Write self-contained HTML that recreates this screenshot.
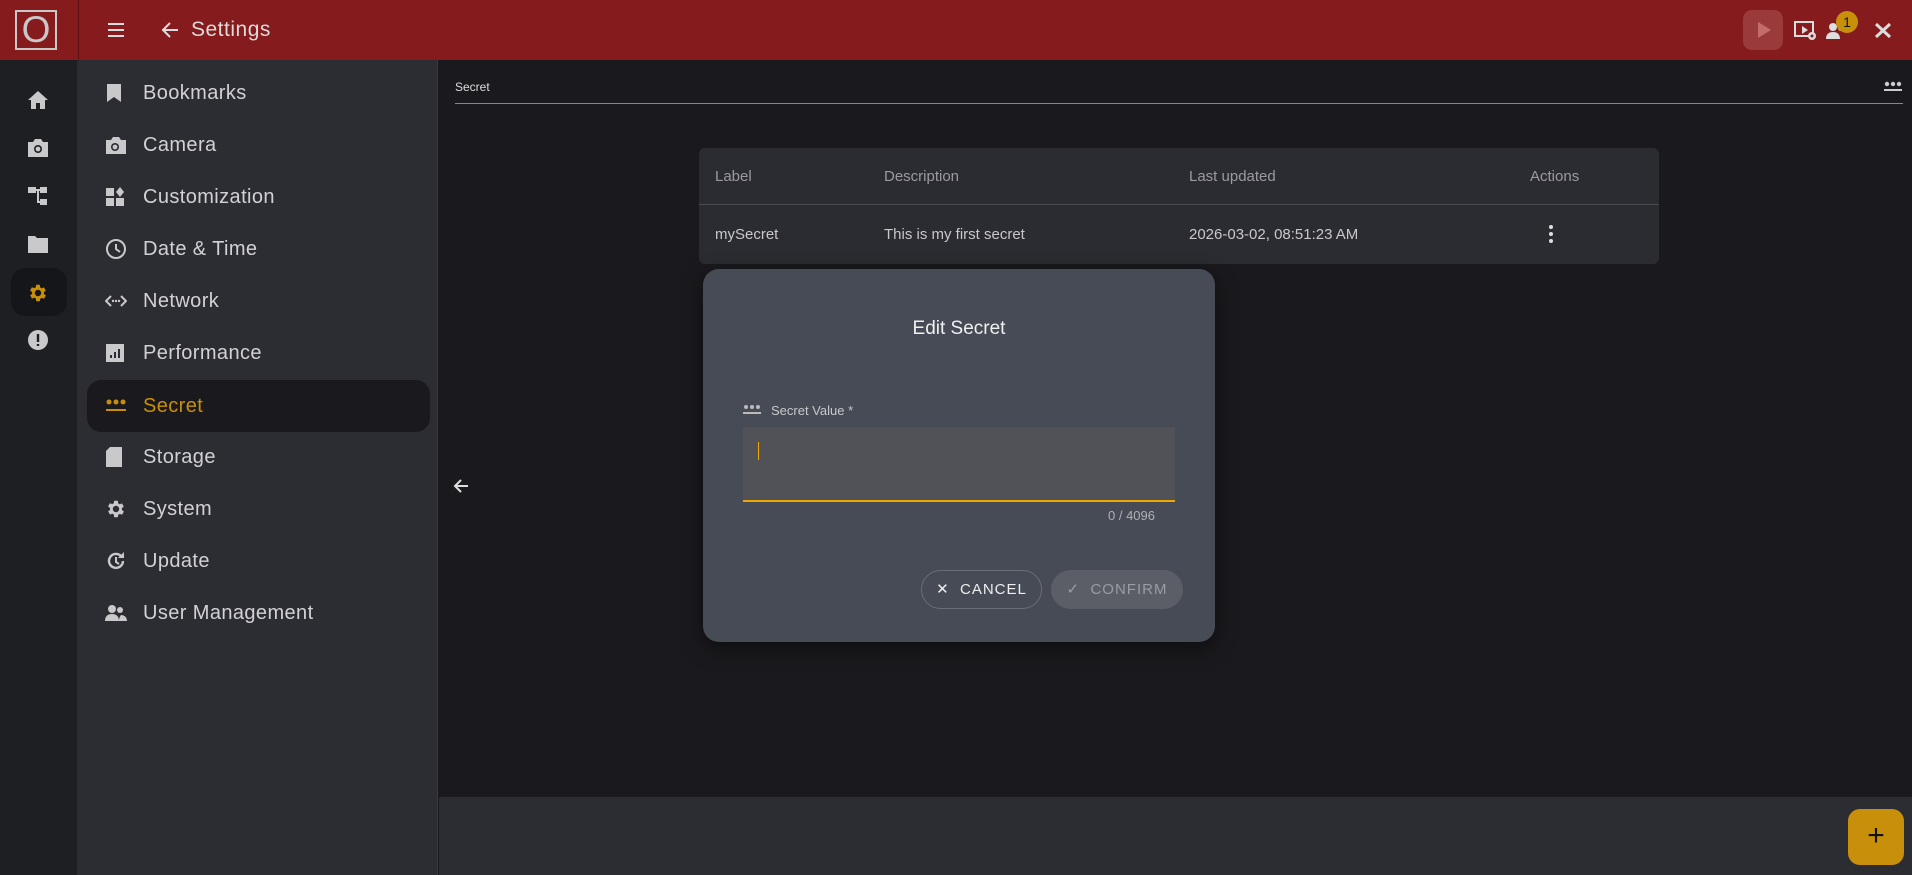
<!DOCTYPE html>
<html><head><meta charset="utf-8"><style>
*{box-sizing:border-box;margin:0;padding:0}
body{width:1912px;height:875px;overflow:hidden;background:#1a1a1e;font-family:"Liberation Sans",sans-serif;position:relative;color:#d6d6d8}
.abs{position:absolute}
#hdr{left:0;top:0;width:1912px;height:60px;background:#861b1d}
#rail{left:0;top:60px;width:78px;height:815px;background:#1d1f23;border-right:1px solid #2a2b30}
#side{left:78px;top:60px;width:360px;height:815px;background:#2c2d32;border-right:1px solid #3a3b40}
.mi{position:absolute;left:9px;width:343px;height:52px;display:flex;align-items:center;font-size:20px;color:#d2d2d6;letter-spacing:.4px}
.mi svg{position:absolute;left:18px}
.mi span{position:absolute;left:56px}
.sel{background:#1a1a1e;border-radius:14px;color:#c8900a}
.ri{position:absolute;left:27px}
</style></head><body>
<div id="hdr" class="abs">
 <div class="abs" style="left:15px;top:10px;width:42px;height:40px;border:2px solid #c8c8c8;color:#c8c8c8;font-size:37px;line-height:36px;text-align:center">O</div>
 <div class="abs" style="left:78px;top:0;width:1px;height:60px;background:#5a1012"></div>
 <svg class="abs" style="left:106px;top:20px" width="20" height="20" viewBox="0 0 20 20"><path d="M2 4h16M2 10h16M2 16h16" stroke="#ddd" stroke-width="2"/></svg>
 <svg class="abs" style="left:160px;top:20px" width="20" height="20" viewBox="0 0 20 20"><path d="M18 10H4M10 3L3 10l7 7" stroke="#ddd" stroke-width="2" fill="none"/></svg>
 <div class="abs" style="left:191px;top:18px;font-size:21px;color:#dcdcdc;letter-spacing:.5px">Settings</div>
 <div class="abs" style="left:1743px;top:10px;width:40px;height:40px;border-radius:9px;background:#9a3a3b"></div>
 <svg class="abs" style="left:1756px;top:21px" width="16" height="18"><path d="M2 1l13 8-13 8z" fill="#c46c6c"/></svg>
 <svg class="abs" style="left:1794px;top:20px" width="24" height="22" viewBox="0 0 24 22"><rect x="1" y="2" width="18" height="14" fill="none" stroke="#ddd" stroke-width="2"/><path d="M8 6l6 4-6 4z" fill="#ddd"/><circle cx="18" cy="16" r="4" fill="#ddd"/><circle cx="18" cy="16" r="1.5" fill="#861b1d"/></svg>
 <svg class="abs" style="left:1826px;top:22px" width="22" height="18" viewBox="0 0 22 18"><circle cx="7" cy="5" r="4" fill="#ddd"/><path d="M0 17c0-5 3-7 7-7s7 2 7 7z" fill="#ddd"/><circle cx="15" cy="6" r="3" fill="#ddd"/></svg>
 <div class="abs" style="left:1836px;top:11px;width:22px;height:22px;border-radius:50%;background:#c8900a;color:#111;font-size:14px;text-align:center;line-height:22px">1</div>
 <svg class="abs" style="left:1873px;top:21px" width="20" height="18" viewBox="0 0 20 18"><path d="M3 3l14 13M3 16L17 3" stroke="#ddd" stroke-width="3"/></svg>
</div>
<div id="rail" class="abs">
 <svg class="ri" style="top:30px" width="22" height="20" viewBox="0 0 22 20"><path d="M11 1L1 10h3v9h5v-6h4v6h5v-9h3z" fill="#c9c9cc"/></svg>
 <svg class="ri" style="top:78px" width="22" height="20" viewBox="0 0 22 20"><path d="M1 4h5l2-3h6l2 3h5v15H1z" fill="#c9c9cc"/><circle cx="11" cy="11" r="4" fill="#1d1f23"/><circle cx="11" cy="11" r="2.4" fill="#c9c9cc"/></svg>
 <svg class="ri" style="top:126px" width="22" height="20" viewBox="0 0 22 20"><rect x="1" y="1" width="8" height="6" fill="#c9c9cc"/><rect x="13" y="1" width="7" height="6" fill="#c9c9cc"/><rect x="13" y="13" width="7" height="6" fill="#c9c9cc"/><path d="M9 4h4M11 4v12h2" stroke="#c9c9cc" stroke-width="2" fill="none"/></svg>
 <svg class="ri" style="top:174px" width="22" height="20" viewBox="0 0 22 20"><path d="M1 2h7l2 2h11v15H1z" fill="#c9c9cc"/></svg>
 <div class="abs" style="left:11px;top:208px;width:56px;height:48px;border-radius:14px;background:#151619"></div>
 <svg class="ri" style="top:222px" width="22" height="22" viewBox="0 0 24 24"><path d="M19.4 13a7.5 7.5 0 000-2l2.1-1.6-2-3.5-2.5 1a7.3 7.3 0 00-1.7-1L15 3h-4l-.4 2.7a7.3 7.3 0 00-1.7 1l-2.5-1-2 3.5L6.6 11a7.5 7.5 0 000 2l-2.1 1.6 2 3.5 2.5-1a7.3 7.3 0 001.7 1L11 21h4l.4-2.7a7.3 7.3 0 001.7-1l2.5 1 2-3.5zM13 15.5a3.5 3.5 0 110-7 3.5 3.5 0 010 7z" fill="#c8900a" transform="translate(-1 0)"/></svg>
 <svg class="ri" style="top:269px" width="22" height="22" viewBox="0 0 22 22"><circle cx="11" cy="11" r="10" fill="#c9c9cc"/><path d="M11 5v8M11 15v2" stroke="#1d1f23" stroke-width="2.4"/></svg>
</div>
<div id="side" class="abs">
 <div class="mi" style="top:7px"><svg width="18" height="20"><path d="M2 1h14v18l-7-5-7 5z" fill="#c9c9cc"/></svg><span>Bookmarks</span></div>
 <div class="mi" style="top:59px"><svg width="22" height="20"><path d="M1 5h5l2-3h6l2 3h5v14H1z" fill="#c9c9cc"/><circle cx="10" cy="12" r="4" fill="#2c2d32"/><circle cx="10" cy="12" r="2.4" fill="#c9c9cc"/></svg><span>Camera</span></div>
 <div class="mi" style="top:111px"><svg width="20" height="20"><rect x="1" y="1" width="8" height="8" fill="#c9c9cc"/><rect x="1" y="11" width="8" height="8" fill="#c9c9cc"/><rect x="11" y="11" width="8" height="8" fill="#c9c9cc"/><path d="M15 0l4 5-4 5-4-5z" fill="#c9c9cc"/></svg><span>Customization</span></div>
 <div class="mi" style="top:163px"><svg width="22" height="22"><circle cx="11" cy="11" r="9" fill="none" stroke="#c9c9cc" stroke-width="2"/><path d="M11 6v5l4 3" stroke="#c9c9cc" stroke-width="2" fill="none"/></svg><span>Date &amp; Time</span></div>
 <div class="mi" style="top:215px"><svg width="22" height="20"><path d="M6 5l-5 5 5 5M16 5l5 5-5 5" stroke="#c9c9cc" stroke-width="2" fill="none"/><circle cx="8" cy="10" r="1.2" fill="#c9c9cc"/><circle cx="11" cy="10" r="1.2" fill="#c9c9cc"/><circle cx="14" cy="10" r="1.2" fill="#c9c9cc"/></svg><span>Network</span></div>
 <div class="mi" style="top:267px"><svg width="20" height="20"><rect x="1" y="1" width="18" height="18" fill="#c9c9cc"/><path d="M6 15v-3M10 15V9M14 15V6" stroke="#2c2d32" stroke-width="2"/></svg><span>Performance</span></div>
 <div class="mi sel" style="top:320px"><svg width="22" height="14"><circle cx="4" cy="3" r="2.5" fill="#c8900a"/><circle cx="11" cy="3" r="2.5" fill="#c8900a"/><circle cx="18" cy="3" r="2.5" fill="#c8900a"/><rect x="1" y="10" width="20" height="2" fill="#c8900a"/></svg><span>Secret</span></div>
 <div class="mi" style="top:371px"><svg width="18" height="22"><path d="M5 1h12v20H1V5z" fill="#c9c9cc"/></svg><span>Storage</span></div>
 <div class="mi" style="top:423px"><svg width="22" height="22" viewBox="0 0 24 24"><path d="M19.4 13a7.5 7.5 0 000-2l2.1-1.6-2-3.5-2.5 1a7.3 7.3 0 00-1.7-1L15 3h-4l-.4 2.7a7.3 7.3 0 00-1.7 1l-2.5-1-2 3.5L6.6 11a7.5 7.5 0 000 2l-2.1 1.6 2 3.5 2.5-1a7.3 7.3 0 001.7 1L11 21h4l.4-2.7a7.3 7.3 0 001.7-1l2.5 1 2-3.5zM13 15.5a3.5 3.5 0 110-7 3.5 3.5 0 010 7z" fill="#c9c9cc" transform="translate(-1 0)"/></svg><span>System</span></div>
 <div class="mi" style="top:475px"><svg width="22" height="22"><path d="M18 11a7 7 0 11-2-5" stroke="#c9c9cc" stroke-width="2.4" fill="none"/><path d="M19 2v6h-6z" fill="#c9c9cc"/><path d="M11 7v5l3 2" stroke="#c9c9cc" stroke-width="2" fill="none"/></svg><span>Update</span></div>
 <div class="mi" style="top:527px"><svg width="22" height="18"><circle cx="7" cy="5" r="4" fill="#c9c9cc"/><path d="M0 17c0-5 3-7 7-7s7 2 7 7z" fill="#c9c9cc"/><circle cx="15" cy="6" r="3" fill="#c9c9cc"/><path d="M14 17c0-4 2-6 2-6 3 0 6 2 6 6z" fill="#c9c9cc"/></svg><span>User Management</span></div>
</div>
<div class="abs" style="left:455px;top:80px;font-size:12px;color:#ddd">Secret</div>
<svg class="abs" style="left:1884px;top:81px" width="18" height="12"><circle cx="3" cy="3" r="2.2" fill="#ccc"/><circle cx="9" cy="3" r="2.2" fill="#ccc"/><circle cx="15" cy="3" r="2.2" fill="#ccc"/><rect x="0" y="8" width="18" height="2" fill="#ccc"/></svg>
<div class="abs" style="left:455px;top:103px;width:1448px;height:1px;background:#888"></div>
<svg class="abs" style="left:452px;top:477px" width="18" height="18"><path d="M16 9H3M9 3L3 9l6 6" stroke="#ddd" stroke-width="2" fill="none"/></svg>
<div class="abs" style="left:699px;top:148px;width:960px;height:116px;background:#2b2c31;border-radius:6px;font-size:15px">
 <div class="abs" style="left:0;top:56px;width:960px;height:1px;background:#4a4b50"></div>
 <div class="abs" style="left:16px;top:20px;color:#9a9aa0">Label</div>
 <div class="abs" style="left:185px;top:20px;color:#9a9aa0">Description</div>
 <div class="abs" style="left:490px;top:20px;color:#9a9aa0">Last updated</div>
 <div class="abs" style="left:831px;top:20px;color:#9a9aa0">Actions</div>
 <div class="abs" style="left:16px;top:78px;color:#c8c8cc">mySecret</div>
 <div class="abs" style="left:185px;top:78px;color:#c8c8cc">This is my first secret</div>
 <div class="abs" style="left:490px;top:78px;color:#c8c8cc">2026-03-02, 08:51:23 AM</div>
 <svg class="abs" style="left:850px;top:77px" width="4" height="18"><circle cx="2" cy="2" r="2" fill="#ddd"/><circle cx="2" cy="9" r="2" fill="#ddd"/><circle cx="2" cy="16" r="2" fill="#ddd"/></svg>
</div>
<div class="abs" style="left:703px;top:269px;width:512px;height:373px;background:#474b55;border-radius:16px;box-shadow:0 6px 20px rgba(0,0,0,.5)">
 <div class="abs" style="left:0;top:49px;width:512px;text-align:center;font-size:19px;color:#f0f0f0">Edit Secret</div>
 <svg class="abs" style="left:40px;top:136px" width="18" height="10"><circle cx="3" cy="2" r="2" fill="#bbb"/><circle cx="9" cy="2" r="2" fill="#bbb"/><circle cx="15" cy="2" r="2" fill="#bbb"/><rect x="0" y="7" width="18" height="2" fill="#bbb"/></svg>
 <div class="abs" style="left:68px;top:134px;font-size:13px;color:#c8c8cc">Secret Value *</div>
 <div class="abs" style="left:40px;top:158px;width:432px;height:75px;background:#515257;border-bottom:2px solid #f0a800"></div>
 <div class="abs" style="left:55px;top:173px;width:1px;height:18px;background:#f0a800"></div>
 <div class="abs" style="left:405px;top:239px;font-size:13px;color:#b0b0b4">0 / 4096</div>
 <div class="abs" style="left:218px;top:301px;width:121px;height:39px;border:1px solid #6a6d75;border-radius:20px;font-size:15px;color:#eee;letter-spacing:1px;line-height:37px;text-align:center">✕&nbsp;&nbsp;CANCEL</div>
 <div class="abs" style="left:348px;top:301px;width:132px;height:39px;background:#5b5e66;border-radius:20px;font-size:15px;color:#9a9ca2;letter-spacing:1px;line-height:39px;text-align:center">✓&nbsp;&nbsp;CONFIRM</div>
</div>
<div class="abs" style="left:439px;top:797px;width:1473px;height:78px;background:#2c2d32"></div>
<div class="abs" style="left:1848px;top:809px;width:56px;height:56px;border-radius:12px;background:#c8900a;color:#111;font-size:30px;text-align:center;line-height:54px">+</div>
</body></html>
